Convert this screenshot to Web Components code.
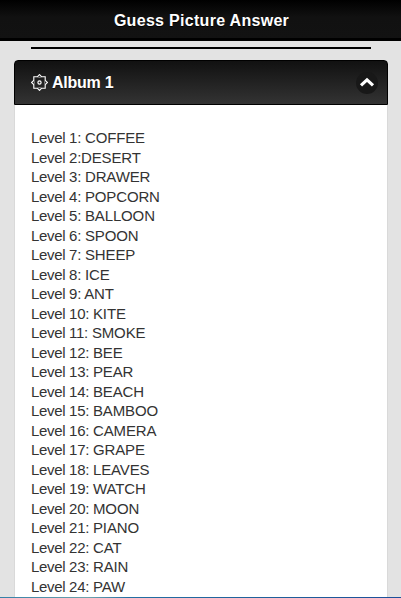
<!DOCTYPE html>
<html lang="en">
<head>
<meta charset="utf-8">
<title>Guess Picture Answer</title>
<style>
    html, body {
        margin: 0;
        height: 100%;
        overflow: hidden;
    }

    body {
        background: #e3e3e3;
        color: #333;
        font-family: "Liberation Sans", Arial, sans-serif;
    }
</style>
</head>
<body>

<answer-page>
    <page-header slot="header">Guess Picture Answer</page-header>
    <album-panel name="Album 1">
        <level-list answers=" COFFEE,DESERT, DRAWER, POPCORN, BALLOON, SPOON, SHEEP, ICE, ANT, KITE, SMOKE, BEE, PEAR, BEACH, BAMBOO, CAMERA, GRAPE, LEAVES, WATCH, MOON, PIANO, CAT, RAIN, PAW"></level-list>
    </album-panel>
</answer-page>

<script>
// page frame: header, divider line, content and the thin blue edge at the bottom
const pageTemplate = document.createElement('template');
pageTemplate.innerHTML = `
    <style>
    :host {
        display: flex;
        flex-direction: column;
        height: 100vh;
    }
    main {
        flex: 1;
        min-height: 0;
        overflow: hidden;
        padding: 6px 13px 0 14px;
    }
    .line {
        height: 2px;
        margin: 0 17px 11px;
        background: #000;
    }
    .edge {
        height: 1px;
        background: linear-gradient(90deg, #3380a8, #6fa3ad 22%, #236fa3 32%, #1f5f9a 70%, #1d509a);
    }
    </style>

    <slot name="header"></slot>
    <main>
        <div class="line"></div>
        <slot></slot>
    </main>
    <div class="edge"></div>
    `;

class AnswerPage extends HTMLElement {
    constructor() {
        super();
        this.attachShadow({ mode: 'open' });
        this.shadowRoot.appendChild(pageTemplate.content.cloneNode(true));
    }
}

const headerTemplate = document.createElement('template');
headerTemplate.innerHTML = `
    <style>
    :host {
        display: block;
        box-sizing: border-box;
        height: 41px;
        border-bottom: 3px solid #000;
        background: linear-gradient(#000, #111 45%, #121212);
    }
    h1 {
        margin: 0;
        padding-left: 2px;
        color: #fff;
        font-size: 16px;
        letter-spacing: .3px;
        line-height: 41px;
        text-align: center;
        text-shadow: 0 1px 0 #000;
    }
    </style>

    <h1><slot></slot></h1>
    `;

class PageHeader extends HTMLElement {
    constructor() {
        super();
        this.attachShadow({ mode: 'open' });
        this.shadowRoot.appendChild(headerTemplate.content.cloneNode(true));
    }
}

const panelTemplate = document.createElement('template');
panelTemplate.innerHTML = `
    <style>
    :host {
        display: block;
    }
    .heading {
        box-sizing: border-box;
        display: flex;
        align-items: center;
        height: 45px;
        padding: 0 9px 0 16px;
        border: 1px solid #000;
        border-radius: 4px 4px 0 0;
        background: linear-gradient(#111, #333);
        color: #fff;
        cursor: pointer;
    }
    .star {
        width: 17px;
        height: 17px;
        margin-right: 4px;
    }
    h3 {
        flex: 1;
        margin: 0;
        font-size: 16px;
        letter-spacing: -.25px;
        line-height: 20px;
        text-shadow: 0 1px 0 #111;
    }
    .arrow {
        width: 22px;
        height: 22px;
    }
    .arrow.closed {
        transform: rotate(180deg);
    }
    .content {
        padding: 23px 16px 0;
        background: #fff;
        border: solid #d9d9d9;
        border-width: 0 1px;
    }
    </style>

    <div class="heading">
        <svg class="star" viewBox="0 0 17 17" fill="none" stroke="#fff" stroke-width="1">
            <path d="M8.5 .6 10.7 2.8H14.2V6.3L16.4 8.5 14.2 10.7V14.2H10.7L8.5 16.4 6.3 14.2H2.8V10.7L.6 8.5 2.8 6.3V2.8H6.3Z" stroke-width="1.1" />
            <path d="M6.3 2.8 8.5 3.4 10.7 2.8M14.2 6.3 13.6 8.5 14.2 10.7M10.7 14.2 8.5 13.6 6.3 14.2M2.8 10.7 3.4 8.5 2.8 6.3" stroke-opacity=".5" />
            <circle cx="8.5" cy="8.5" r="1.6" stroke-width="1.2" />
        </svg>
        <h3></h3>
        <svg class="arrow" viewBox="0 0 22 22">
            <circle cx="11" cy="11" r="11" fill="#181818" />
            <path d="M5 13.4 11 7.9 17 13.4" fill="none" stroke="#fff" stroke-width="3.2" />
        </svg>
    </div>
    <div class="content"><slot></slot></div>
    `;

class AlbumPanel extends HTMLElement {
    constructor() {
        super();
        this.attachShadow({ mode: 'open' });
        this.shadowRoot.appendChild(panelTemplate.content.cloneNode(true));
        this.shadowRoot.querySelector('h3').textContent = this.getAttribute('name');
        this.togglePanel = this.togglePanel.bind(this);
    }

    // show or hide the answers
    togglePanel() {
        const content = this.shadowRoot.querySelector('.content');
        content.hidden = !content.hidden;
        content.style.display = content.hidden ? 'none' : '';
        this.shadowRoot.querySelector('.arrow').classList.toggle('closed', content.hidden);
    }

    connectedCallback() {
        this.shadowRoot.querySelector('.heading').addEventListener('click', this.togglePanel);
    }

    disconnectedCallback() {
        this.shadowRoot.querySelector('.heading').removeEventListener('click', this.togglePanel);
    }
}

const listTemplate = document.createElement('template');
listTemplate.innerHTML = `
    <style>
    :host {
        display: block;
        padding-bottom: 20px;
        font-size: 15px;
        line-height: 19.5px;
    }
    div {
        white-space: pre;
        letter-spacing: -.15px;
    }
    span {
        letter-spacing: -.32px;
    }
    </style>
    `;

class LevelList extends HTMLElement {
    constructor() {
        super();
        this.attachShadow({ mode: 'open' });
        this.shadowRoot.appendChild(listTemplate.content.cloneNode(true));

        // one row for each answer, numbered from 1
        this.getAttribute('answers').split(',').forEach((answer, i) => {
            const row = document.createElement('div');
            const label = document.createElement('span');
            label.textContent = `Level ${i + 1}:`;
            row.append(label, answer);
            this.shadowRoot.appendChild(row);
        });
    }
}

window.customElements.define('answer-page', AnswerPage);
window.customElements.define('page-header', PageHeader);
window.customElements.define('album-panel', AlbumPanel);
window.customElements.define('level-list', LevelList);
</script>
</body>
</html>
